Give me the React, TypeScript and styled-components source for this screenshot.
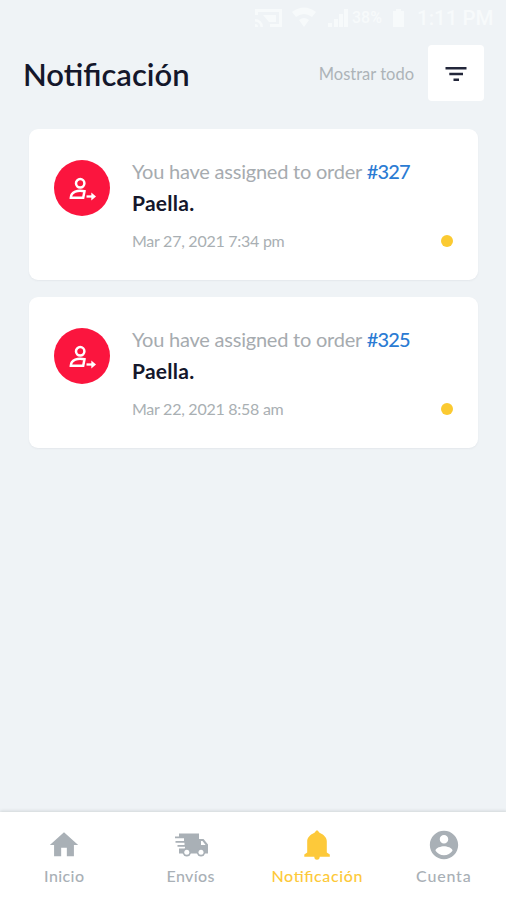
import React from "react";
import styled, { createGlobalStyle } from "styled-components";

const GlobalStyle = createGlobalStyle`
  * { box-sizing: border-box; }
  body { margin: 0; background: #eff3f6; font-family: Lato, "Open Sans", sans-serif; }
`;

const Screen = styled.div`
  width: 506px;
  height: 900px;
  display: flex;
  flex-direction: column;
  overflow: hidden;
  background: #eff3f6;
`;

const StatusBar = styled.div`
  height: 36px;
  padding: 0 10px 0 254px;
  display: flex;
  align-items: center;
  color: #f7fafb;
  font: 500 18px/36px Roboto, sans-serif;
  svg { display: block; flex: none; }
`;

const StatusText = styled.span<{ $width: number; $size: number }>`
  width: ${(p) => p.$width}px;
  font-size: ${(p) => p.$size}px;
  flex: none;
  white-space: nowrap;
`;

const Header = styled.header`
  height: 77px;
  padding: 9px 22px 0 23px;
  display: flex;
  align-items: flex-start;
`;

const Title = styled.h1`
  margin: 0;
  flex: 1;
  font-size: 31px;
  line-height: 59px;
  font-weight: 600;
  letter-spacing: 0;
  color: #14172b;
`;

const ShowAll = styled.span`
  margin-right: 14px;
  font-size: 16.5px;
  line-height: 59px;
  color: #adb3b8;
`;

const FilterButton = styled.button`
  width: 56px;
  height: 56px;
  padding: 0;
  border: 0;
  border-radius: 4px;
  background: #fff;
  display: grid;
  place-items: center;
`;

const List = styled.main`
  flex: 1;
  padding: 16px 28px 0 29px;
  display: flex;
  flex-direction: column;
  gap: 17px;
`;

const Card = styled.article`
  height: 151px;
  padding: 31px 25px 0;
  border-radius: 9px;
  background: #fff;
  box-shadow: 0 1px 2px rgba(60, 75, 85, 0.06);
  display: flex;
  gap: 22px;
`;

const Avatar = styled.div`
  width: 56px;
  height: 56px;
  padding-top: 2px;
  flex: none;
  border-radius: 50%;
  background: #fb153e;
  display: grid;
  place-items: center;
`;

const Body = styled.div`
  flex: 1;
  white-space: nowrap;
`;

const Message = styled.div`
  font-size: 20px;
  line-height: 22px;
  letter-spacing: -0.22px;
  color: #a6abaf;
`;

const Order = styled.span`
  color: #2b7bd3;
  font-weight: 500;
  letter-spacing: -0.8px;
`;

const Item = styled.div`
  margin-top: 9px;
  font-size: 21px;
  line-height: 24px;
  font-weight: 700;
  letter-spacing: 0.25px;
  color: #14172b;
`;

const Meta = styled.div`
  margin-top: 14px;
  display: flex;
  align-items: center;
  justify-content: space-between;
  font-size: 16px;
  line-height: 24px;
  letter-spacing: -0.26px;
  color: #a9afb3;
`;

const Unread = styled.span`
  width: 12px;
  height: 12px;
  border-radius: 50%;
  background: #fbca31;
`;

const Nav = styled.nav`
  height: 88px;
  flex: none;
  padding-left: 1px;
  margin-right: -1px;
  background: #fff;
  box-shadow: 0 -1px 3px rgba(50, 60, 70, 0.16);
  display: grid;
  grid-template-columns: repeat(4, 1fr);
`;

const Tab = styled.a<{ $active?: boolean }>`
  padding-top: 16px;
  display: flex;
  flex-direction: column;
  align-items: center;
  color: ${(p) => (p.$active ? "#fdc93a" : "#a9b0b6")};
  svg { display: block; }
`;

const TabLabel = styled.span<{ $spacing: number }>`
  margin-top: 3px;
  font-size: 16px;
  line-height: 22px;
  font-weight: 500;
  letter-spacing: ${(p) => p.$spacing}px;
  font-feature-settings: "liga" 1;
`;

const AssignIcon = () => (
  <svg width="28" height="26" viewBox="0 0 28 26" fill="none" stroke="#fff" strokeWidth="2.5">
    <circle cx="12.2" cy="7.3" r="4.2" />
    <path d="M16.5 15.2C10 13.6 2.8 15.6 2.8 21.8H15.2L16.5 15.2Z" />
    <path d="M18.5 20.5H26" strokeWidth="2.3" />
    <path d="M23.3 16.6L28 20.5L23.3 24.4Z" fill="#fff" stroke="none" />
  </svg>
);

const HomeIcon = () => (
  <svg width="34" height="34" viewBox="0 0 24 24" fill="currentColor">
    <path d="M10 20v-6h4v6h5v-8h3L12 3 2 12h3v8z" />
  </svg>
);

const TruckIcon = () => (
  <svg width="34" height="34" viewBox="0 0 34 34" fill="currentColor">
    <path d="M5 5.5H25V11H29.5L34 16.5V25.5H5V20.5H11V18.7H3.5V17H10.5V14.7H1.5V13H10V10.3H1V8.5H5ZM27 13V17H31.6L28.5 13Z" fillRule="evenodd" />
    <circle cx="12.8" cy="24.3" r="4.2" />
    <circle cx="27" cy="24.3" r="4.2" />
    <circle cx="12.8" cy="24.3" r="2.5" fill="#fff" />
    <circle cx="27" cy="24.3" r="2.5" fill="#fff" />
  </svg>
);

const BellIcon = () => (
  <svg width="34" height="34" viewBox="0 0 34 34" fill="currentColor">
    <path d="M17 2.3Q18.2 2.8 19.2 4.6C24 7 26.8 9.6 26.8 13.5V24.5L29.8 26.5V28.7H4.3V26.5L7.2 24.5V13.5C7.2 9.6 10 7 14.8 4.6Q15.8 2.8 17 2.3ZM14.3 28.7H19.7A2.7 3 0 0 1 14.3 28.7Z" />
  </svg>
);

const AccountIcon = () => (
  <svg width="34" height="34" viewBox="0 0 24 24" fill="currentColor">
    <path d="M12 2C6.48 2 2 6.48 2 12s4.48 10 10 10 10-4.48 10-10S17.52 2 12 2zm0 3c1.66 0 3 1.34 3 3s-1.34 3-3 3-3-1.34-3-3 1.34-3 3-3zm0 14.2c-2.5 0-4.71-1.28-6-3.22.03-1.99 4-3.08 6-3.08 1.99 0 5.97 1.09 6 3.08-1.29 1.94-3.5 3.22-6 3.22z" />
  </svg>
);

const notifications = [
  { order: "#327", item: "Paella.", date: "Mar 27, 2021 7:34 pm" },
  { order: "#325", item: "Paella.", date: "Mar 22, 2021 8:58 am" },
];

const tabs = [
  { label: "Inicio", icon: <HomeIcon />, spacing: 0.4 },
  { label: "Envíos", icon: <TruckIcon />, spacing: 0.4 },
  { label: "Notificación", icon: <BellIcon />, spacing: 0.6, active: true },
  { label: "Cuenta", icon: <AccountIcon />, spacing: 0.8 },
];

export default function App() {
  return (
    <>
      <GlobalStyle />
      <Screen>
        <StatusBar>
          <svg width="98" height="24" viewBox="0 0 98 24" fill="currentColor">
            <path d="M1 3H28V21H16V18H25V6H4V9H1ZM1 18a3 3 0 0 1 3 3H1ZM1 13a8 8 0 0 1 8 8H6.5A5.5 5.5 0 0 0 1 15.5ZM9 9H22V16H15Z" />
            <path d="M38 6Q50-3 62 6L58 11Q50 5 42 11ZM45 14Q50 10 55 14L50 21Z" />
            <path d="M74 17h4v4h-4zM80 13h4v8h-4zM85 8h4v13h-4zM90 3h4v18h-4z" />
          </svg>
          <StatusText $width={37} $size={16}>38%</StatusText>
          <svg width="28" height="24" viewBox="0 0 28 24" fill="currentColor">
            <path d="M7 3H12V5H15V21H4V5H7Z" />
          </svg>
          <StatusText $width={80} $size={20.5}>1:11 PM</StatusText>
        </StatusBar>
        <Header>
          <Title>Notificación</Title>
          <ShowAll>Mostrar todo</ShowAll>
          <FilterButton aria-label="Filtrar">
            <svg width="24" height="18" viewBox="0 0 24 18" stroke="#22263a" strokeWidth="2.4">
              <path d="M1.5 4.3H22.5M5.3 10H19M9.5 15.8H15" />
            </svg>
          </FilterButton>
        </Header>
        <List>
          {notifications.map((n) => (
            <Card key={n.order}>
              <Avatar><AssignIcon /></Avatar>
              <Body>
                <Message>You have assigned to order <Order>{n.order}</Order></Message>
                <Item>{n.item}</Item>
                <Meta><span>{n.date}</span><Unread /></Meta>
              </Body>
            </Card>
          ))}
        </List>
        <Nav>
          {tabs.map((t) => (
            <Tab key={t.label} $active={t.active}>
              {t.icon}
              <TabLabel $spacing={t.spacing}>{t.label}</TabLabel>
            </Tab>
          ))}
        </Nav>
      </Screen>
    </>
  );
}
